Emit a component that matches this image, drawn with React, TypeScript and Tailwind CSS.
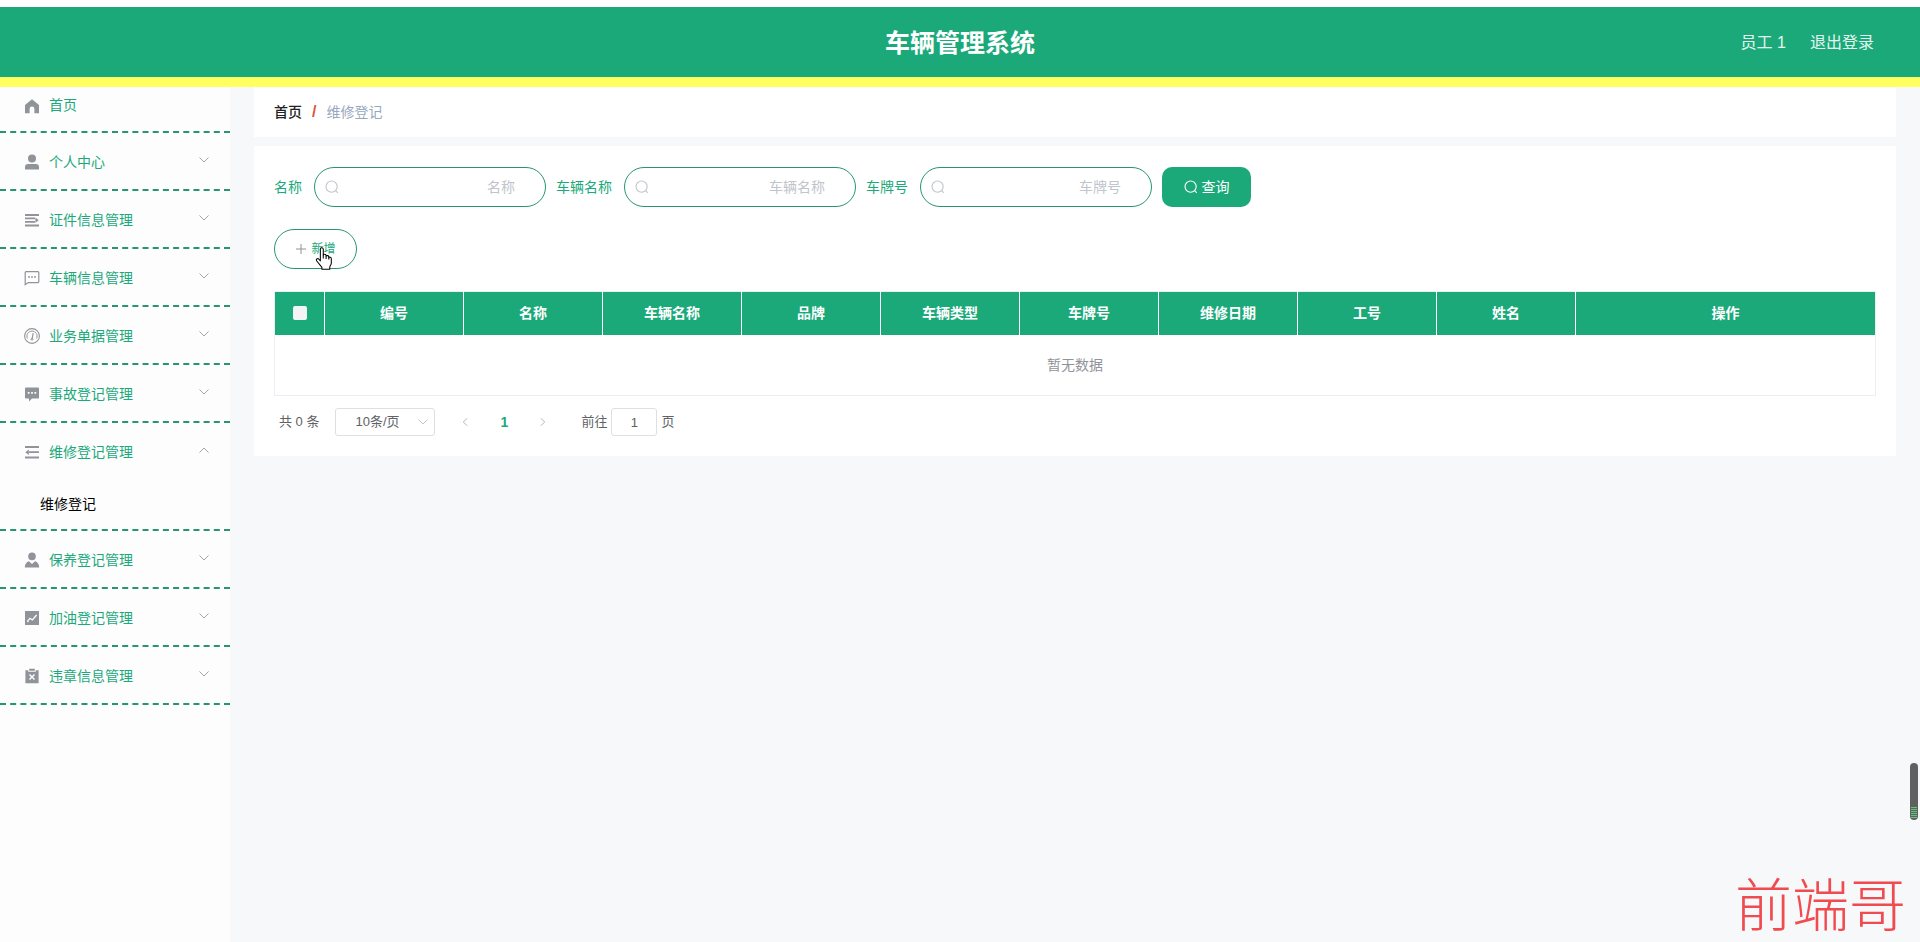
import { useState, type ReactNode } from "react";

type MenuItem = {
  label: string;
  icon: ReactNode;
  children?: string[];
};

function Icon({ children }: { children: ReactNode }) {
  return (
    <svg
      viewBox="0 0 16 16"
      className="h-4 w-4 shrink-0"
      fill="currentColor"
      aria-hidden="true"
    >
      {children}
    </svg>
  );
}

const menu: MenuItem[] = [
  {
    label: "个人中心",
    icon: (
      <Icon>
        <circle cx="8" cy="4.6" r="4" />
        <path d="M1 15.5v-2.2A3.3 3.3 0 0 1 4.3 10h7.4a3.3 3.3 0 0 1 3.3 3.3v2.2z" />
      </Icon>
    ),
  },
  {
    label: "证件信息管理",
    icon: (
      <Icon>
        <path d="M1 2h14v1.9H1zM1 5.6h10v1.7H1zM1 9.1h10v1.7H1zM1 12.5h14v1.9H1zM11.4 5.6 14.8 8.2l-3.400 2.600z" />
      </Icon>
    ),
  },
  {
    label: "车辆信息管理",
    icon: (
      <Icon>
        <path
          d="M1.2 14.6V2.4a.8.8 0 0 1 .8-.8h12a.8.8 0 0 1 .8.8v9.4a.8.8 0 0 1-.8.8H4.4z"
          fill="none"
          stroke="currentColor"
          strokeWidth="1.2"
        />
        <circle cx="5" cy="7" r="0.9" />
        <circle cx="8" cy="7" r="0.9" />
        <circle cx="11" cy="7" r="0.9" />
      </Icon>
    ),
  },
  {
    label: "业务单据管理",
    icon: (
      <Icon>
        <g fill="none" stroke="currentColor">
          <circle cx="8" cy="8" r="7.4" strokeWidth="1.1" />
          <path d="M3.4 10.4a5.1 5.1 0 1 1 9.2 0" strokeWidth="1" />
          <path d="M8.2 10.3 9.2 5.2" strokeWidth="1.2" />
          <circle cx="8" cy="11.2" r="1" strokeWidth="1" />
        </g>
      </Icon>
    ),
  },
  {
    label: "事故登记管理",
    icon: (
      <Icon>
        <path
          fillRule="evenodd"
          d="M1.8 1.4h12.4a.8.8 0 0 1 .8.8v9.6a.8.8 0 0 1-.8.8H8L5 15.4v-2.8H1.8a.8.8 0 0 1-.8-.8V2.2a.8.8 0 0 1 .8-.8zM3.8 6v1.8h1.8V6zm3.3 0v1.8h1.8V6zm3.3 0v1.8h1.8V6z"
        />
      </Icon>
    ),
  },
  {
    label: "维修登记管理",
    icon: (
      <Icon>
        <path d="M1 2h14v1.9H1zM5 7.3h10v1.8H5zM1 12.5h14v1.9H1zM4.8 5.4 1.3 8.2l3.5 2.8z" />
      </Icon>
    ),
    children: ["维修登记"],
  },
  {
    label: "保养登记管理",
    icon: (
      <Icon>
        <circle cx="8" cy="4.4" r="3.8" />
        <path d="M.8 15.4c0-3.2 1.6-5.4 4.2-6.2L8 12l3-2.8c2.6.8 4.2 3 4.2 6.2z" />
      </Icon>
    ),
  },
  {
    label: "加油登记管理",
    icon: (
      <Icon>
        <path d="M1 1h14v14H1z" />
        <path
          d="M3.2 11.4 6 8.4l2.4 1.6L12.6 5M3.5 12l1-1"
          fill="none"
          stroke="#fdfdfe"
          strokeWidth="1.3"
        />
      </Icon>
    ),
  },
  {
    label: "违章信息管理",
    icon: (
      <Icon>
        <path d="M1.4 2.2h2.8v1.6h7.6V2.2h2.800v13H1.400zM5.2.8h5.6v2H5.2z" />
        <path
          d="m5.5 6.500 5 5m0-5-5 5"
          fill="none"
          stroke="#fdfdfe"
          strokeWidth="1.5"
        />
      </Icon>
    ),
  },
];

const filters = [
  { id: "name", label: "名称" },
  { id: "carName", label: "车辆名称" },
  { id: "plate", label: "车牌号" },
];

const columns = [
  "编号",
  "名称",
  "车辆名称",
  "品牌",
  "车辆类型",
  "车牌号",
  "维修日期",
  "工号",
  "姓名",
];

function Chevron({ className }: { className: string }) {
  return (
    <svg
      viewBox="0 0 12 12"
      className={className}
      fill="none"
      stroke="currentColor"
      aria-hidden="true"
    >
      <path d="M1.5 3.5 6 8l4.5-4.5" />
    </svg>
  );
}

function SearchIcon() {
  return (
    <svg
      viewBox="0 0 14 14"
      className="h-3.5 w-3.5 shrink-0"
      fill="none"
      stroke="currentColor"
      strokeWidth="1.1"
      aria-hidden="true"
    >
      <circle cx="6.6" cy="6.6" r="5.6" />
      <path d="m10.600 10.600 2.200 2.200" />
    </svg>
  );
}

function Header() {
  return (
    <header className="mt-[7px] grid h-20 grid-cols-3 items-center border-b-[10px] border-[#ffff60] bg-[#1ba97a] px-[46px] pt-0.5 text-white">
      <h1 className="col-start-2 text-center text-[25px] font-bold leading-8">
        车辆管理系统
      </h1>
      <div className="flex items-center justify-end gap-6 text-base text-[#e4f5ef]">
        <span>员工 1</span>
        <a href="#logout">退出登录</a>
      </div>
    </header>
  );
}

function Sidebar() {
  const [opened, setOpened] = useState("维修登记管理");

  return (
    <nav className="w-[230px] shrink-0 bg-[#fdfdfe] text-sm text-[#1ba97a]">
      <ul>
        <li className="border-b-2 border-dashed border-[#259671]">
          <a href="#home" className="flex h-11 items-start gap-[9px] px-6 pt-2">
            <span className="pt-[3px] text-[#909399]">
              <Icon>
                <path d="M8 1.2 15 7v8.2h-4.6V11a2.4 2.4 0 0 0-4.8 0v4.2H1V7z" />
              </Icon>
            </span>
            首页
          </a>
        </li>
        {menu.map((item) => (
          <li
            key={item.label}
            className="border-b-2 border-dashed border-[#259671]"
          >
            <button
              type="button"
              aria-expanded={opened === item.label}
              onClick={() => setOpened(opened === item.label ? "" : item.label)}
              className="flex h-14 w-full cursor-pointer items-center gap-[9px] pl-6 pr-5 pt-0.5"
            >
              <span className="text-[#909399]">{item.icon}</span>
              <span>{item.label}</span>
              <Chevron
                className={
                  opened === item.label
                    ? "mb-1 ml-auto h-3 w-3 rotate-180 text-[#a0a3a8]"
                    : "mb-1 ml-auto h-3 w-3 text-[#a0a3a8]"
                }
              />
            </button>
            {opened === item.label &&
              item.children?.map((child) => (
                <a
                  key={child}
                  href="#repair"
                  className="flex h-[50px] items-center pl-10 text-black"
                >
                  {child}
                </a>
              ))}
          </li>
        ))}
      </ul>
    </nav>
  );
}

function SearchForm() {
  return (
    <form
      className="flex flex-wrap items-center gap-2.5 text-sm"
      onSubmit={(e) => e.preventDefault()}
    >
      {filters.map((f) => (
        <div key={f.id} className="flex items-center gap-3">
          <label htmlFor={f.id} className="text-[#1ba97a]">
            {f.label}
          </label>
          <div className="flex h-10 w-[232px] items-center rounded-full border border-[#259671] pl-2.5 pr-[30px] text-[#c0c4cc]">
            <SearchIcon />
            <input
              id={f.id}
              type="text"
              placeholder={f.label}
              className="w-full min-w-0 bg-transparent text-right text-[#606266] outline-none placeholder:text-[#c0c4cc]"
            />
          </div>
        </div>
      ))}
      <button
        type="submit"
        className="flex h-10 w-[89px] cursor-pointer items-center justify-center gap-1 rounded-[10px] bg-[#1ba97a] text-white"
      >
        <SearchIcon />
        查询
      </button>
    </form>
  );
}

function RepairTable() {
  return (
    <table className="mt-[22px] w-full table-fixed border-collapse border border-[#ebeef5] text-sm">
      <thead>
        <tr className="h-[43px] bg-[#1ba97a] text-white">
          <th className="w-[50px] border-r border-white">
            <input
              type="checkbox"
              aria-label="全选"
              className="mx-auto block h-3.5 w-3.5 appearance-none rounded-xs bg-[#f2f4f5]"
            />
          </th>
          {columns.map((c) => (
            <th key={c} className="w-[139px] border-r border-white font-bold">
              {c}
            </th>
          ))}
          <th className="font-bold">操作</th>
        </tr>
      </thead>
      <tbody>
        <tr className="h-[61px]">
          <td colSpan={11} className="text-center text-[#909399]">
            暂无数据
          </td>
        </tr>
      </tbody>
    </table>
  );
}

function Pagination() {
  return (
    <div className="mt-3 flex h-7 items-center pl-[5px] text-[13px] text-[#606266]">
      <span>共 0 条</span>
      <div className="relative ml-4">
        <select
          aria-label="每页条数"
          className="h-7 w-[100px] appearance-none rounded-[3px] border border-[#dcdfe6] bg-white pl-[19px]"
        >
          <option>10条/页</option>
        </select>
        <Chevron className="pointer-events-none absolute right-1.5 top-2 h-3 w-3 text-[#c0c4cc]" />
      </div>
      <button
        type="button"
        aria-label="上一页"
        className="ml-6 grid h-7 w-3 place-items-center text-[#a4a7ad]"
      >
        <Chevron className="h-2.5 w-2.5 rotate-90" />
      </button>
      <button
        type="button"
        className="mx-2.5 w-[46px] text-sm font-bold text-[#1ba97a]"
      >
        1
      </button>
      <button
        type="button"
        aria-label="下一页"
        className="grid h-7 w-3 place-items-center text-[#a4a7ad]"
      >
        <Chevron className="h-2.5 w-2.5 -rotate-90" />
      </button>
      <label htmlFor="page" className="ml-8">
        前往
      </label>
      <input
        id="page"
        type="text"
        defaultValue="1"
        className="mx-1 h-7 w-[46px] rounded-[3px] border border-[#dcdfe6] text-center"
      />
      <span>页</span>
    </div>
  );
}

function HandCursor() {
  return (
    <svg
      viewBox="0 0 17 22"
      className="pointer-events-none absolute left-[41px] top-[18px] h-[23px] w-[18px]"
      fill="#fff"
      stroke="#000"
      strokeLinejoin="round"
      aria-hidden="true"
    >
      <path d="M5 12V2.2a1.4 1.4 0 0 1 2.8 0V8c0-1.4 2.7-1.3 2.7.3V9c.3-1.2 2.6-1 2.6.6v.6c.5-1 2.4-.6 2.4 1v4.3c0 1.5-1.5 2.500-1.500 4v1.700H6.500V19.500L1.600 13.400c-1.300-1.700.8-3 2-1.700L5 13.300z" />
      <path d="M7.8 8v3M10.5 9v2.500M13.100 10v2" fill="none" />
    </svg>
  );
}

export default function App() {
  return (
    <div className="flex min-h-screen flex-col bg-white font-['Liberation_Sans','Noto_Sans_CJK_SC',sans-serif]">
      <Header />
      <div className="flex flex-1 bg-[#f7f8f9]">
        <Sidebar />
        <main className="min-w-0 flex-1 px-6">
          <div className="flex h-[50px] items-center gap-2.5 bg-white px-5 text-sm">
            <a href="#home" className="font-medium text-[#222]">
              首页
            </a>
            <span className="text-base font-bold text-[#e0573c]">/</span>
            <span className="text-[#97a8be]">维修登记</span>
          </div>

          <section className="mt-[9px] bg-white px-5 pb-5 pt-[21px]">
            <SearchForm />
            <div className="relative mt-[22px] w-fit">
              <button
                type="button"
                className="flex h-10 w-[83px] cursor-pointer items-center justify-center gap-1 rounded-full border border-[#259671] text-xs text-[#1ba97a]"
              >
                <svg
                  viewBox="0 0 12 12"
                  className="h-3 w-3"
                  stroke="#909399"
                  aria-hidden="true"
                >
                  <path d="M6 1v10M1 6h10" />
                </svg>
                新增
              </button>
              <HandCursor />
            </div>
            <RepairTable />
            <Pagination />
          </section>
        </main>
      </div>

      <div className="fixed right-0.5 top-[763px] flex h-[57px] w-2 flex-col justify-end gap-px rounded-full bg-[#606060] px-px pb-0.5">
        <span className="h-px bg-[#5fc878]" />
        <span className="h-px bg-[#5fc878]" />
        <span className="h-px bg-[#5fc878]" />
        <span className="h-px bg-[#5fc878]" />
        <span className="h-px bg-[#5fc878]" />
        <span className="h-px bg-[#5fc878]" />
      </div>
      <div className="fixed bottom-1 right-3.5 text-[57px] font-light leading-[64px] text-[#f04b50]">
        前端哥
      </div>
    </div>
  );
}
